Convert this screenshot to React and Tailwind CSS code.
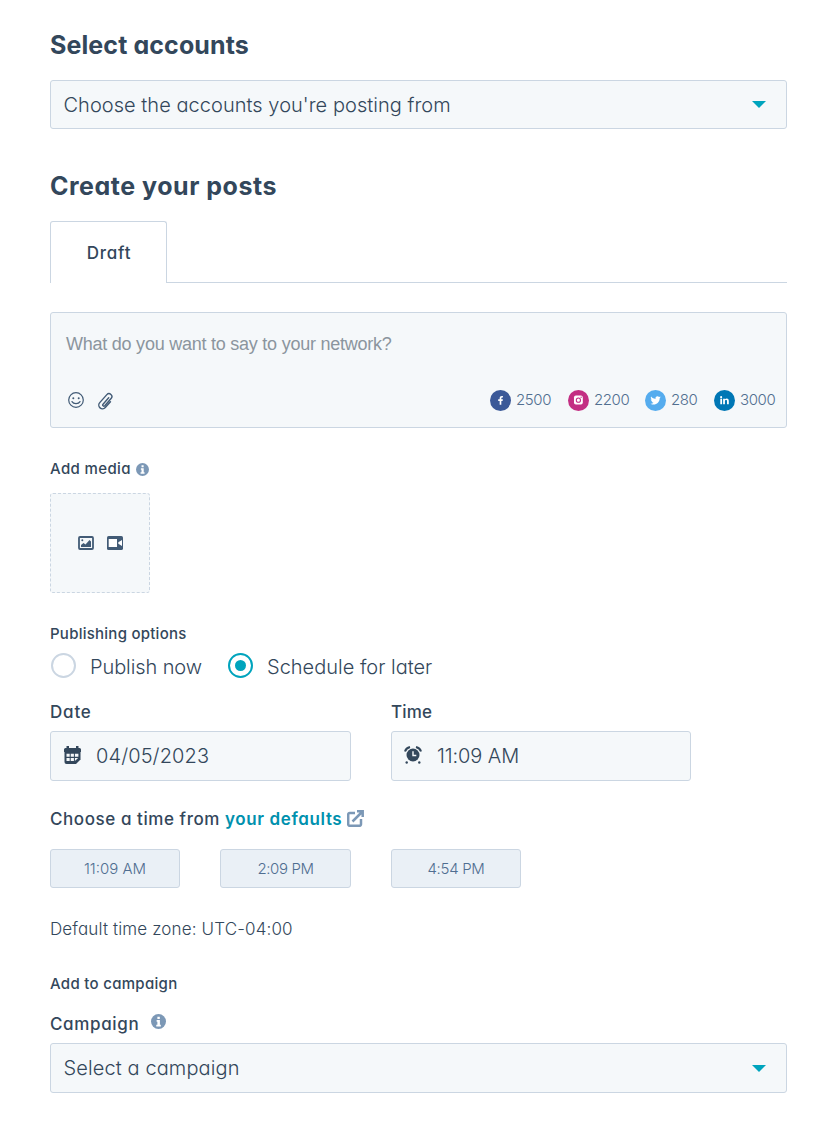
import React from 'react';
import clsx from 'clsx';

const InfoIcon = ({ className }) => (
  <svg viewBox="0 0 16 16" className={className}>
    <circle cx="8" cy="8" r="8" fill="#7c98b6" />
    <path d="M6.800 2.800h2.600v2.400H6.800zM6 6.500h3.500v4.900h1v1.800H5.600v-1.800h1.200V8.300H6z" fill="#fff" />
  </svg>
);

const SmileIcon = () => (
  <svg viewBox="0 0 16 16" className="w-4 h-4" fill="none" stroke="#425b76" strokeWidth="1.2">
    <circle cx="8" cy="8" r="7.3" />
    <path d="M4 9.6c.8 1.500 2.200 2.100 4 2.100s3.200-.6 4-2.100" strokeLinecap="round" />
    <circle cx="5.300" cy="6.200" r="1" fill="#425b76" stroke="none" />
    <circle cx="10.700" cy="6.200" r="1" fill="#425b76" stroke="none" />
  </svg>
);

const ClipIcon = () => (
  <svg viewBox="0 0 24 24" className="w-[17px] h-[18px] mt-[2px]" fill="none" stroke="#425b76" strokeWidth="2" strokeLinecap="round" strokeLinejoin="round">
    <path d="m16.500 7.500-8 9a1.600 1.600 0 0 0 2.400 2.200l9-10.300a4 4 0 0 0-6-5.400l-10 11.300a5.200 5.200 0 0 0 7.800 7l7.300-8.300" />
  </svg>
);

const ImageIcon = () => (
  <svg viewBox="0 0 16 14" className="w-4 h-[14px]">
    <rect x="1" y="1" width="14" height="12" rx="1" fill="none" stroke="#425b76" strokeWidth="1.800" />
    <path d="M3 11V9l2.500-2 2 1.500 4-4.500L13 5.500V11z" fill="#425b76" />
    <circle cx="4.300" cy="4.300" r="1" fill="#425b76" />
  </svg>
);

const VideoIcon = () => (
  <svg viewBox="0 0 16 14" className="w-4 h-[14px]">
    <rect width="16" height="14" rx="1.600" fill="#425b76" />
    <path d="M1.700 3h8.300v8H1.700zM15 4v6l-3.700-2.300V6.300z" fill="#fff" />
  </svg>
);

const CalendarIcon = () => (
  <svg viewBox="0 0 17 18" className="w-[17px] h-[18px]">
    <path d="M2.500 0h2.500v2h7V0h2.500v2h1A1.500 1.500 0 0 1 17 3.500V6H0V3.500A1.500 1.500 0 0 1 1.500 2h1z" fill="#33475b" />
    <path d="M.5 6h16v7.500L12 18H2.500a2 2 0 0 1-2-2z" fill="#33475b" />
    <path d="M2.500 7.800h3.200v3H2.500zm4.200 0h3.200v3H6.700zm4.200 0h3.500v3h-3.500zM2.500 12h3.200v3H2.500zm4.200 0h3.200v3H6.700zm4.200 0h3.200l-3.200 3z" fill="#f5f8fa" />
  </svg>
);

const AlarmIcon = () => (
  <svg viewBox="0 0 18 18" className="w-[18px] h-[18px] -ml-px">
    <circle cx="9" cy="9" r="6.500" fill="#33475b" />
    <path d="M9 5.200V9.500H12.300" fill="none" stroke="#f5f8fa" strokeWidth="1.400" />
    <path d="M1 5.500Q2 2 6 1M12 1q4 1 5 4.500" fill="none" stroke="#33475b" strokeWidth="2" />
    <circle cx="2.700" cy="16.500" r="1.200" fill="#33475b" />
    <circle cx="15.300" cy="16.500" r="1.200" fill="#33475b" />
  </svg>
);

const ExternalIcon = () => (
  <svg viewBox="0 0 17 17" className="w-[17px] h-[17px] mb-[4px]" fill="none" stroke="#7c98b6" strokeWidth="2.500">
    <path d="M8 3H2.700A1.500 1.500 0 0 0 1.200 4.500v9.800a1.500 1.500 0 0 0 1.500 1.500h9.800a1.500 1.500 0 0 0 1.500-1.500V9M5.500 11.500 15 2M10 1.300h5.700V7" />
  </svg>
);

const networks = [
  {
    name: 'facebook',
    count: '2500',
    width: 'w-[78px]',
    color: '#3b5998',
    glyph: <path d="M9.200 14v-3.500H7.800V8.900h1.400V7.800c0-1.500.9-2.200 2.100-2.200h1v1.500h-.7c-.6 0-.8.3-.8.800v1h1.500l-.3 1.600h-1.200V14z" fill="#fff" />
  },
  {
    name: 'instagram',
    count: '2200',
    width: 'w-[77px]',
    color: '#c32f83',
    glyph: (
      <>
        <rect x="5.700" y="5.300" width="8.400" height="8.400" rx="1.800" fill="#fff" />
        <circle cx="9.900" cy="9.700" r="2" fill="none" stroke="#c32f83" strokeWidth="1" />
        <circle cx="12.500" cy="6.900" r=".6" fill="#c32f83" />
      </>
    )
  },
  {
    name: 'twitter',
    count: '280',
    width: 'w-[69px]',
    color: '#55acee',
    glyph: <path d="M15 6.900c-.3.200-.7.300-1.100.3.400-.3.700-.6.800-1.100-.4.200-.8.400-1.300.5a2 2 0 0 0-3.400 1.900C8.300 8.400 6.800 7.600 5.800 6.300a2 2 0 0 0 .6 2.700c-.3 0-.6-.1-.9-.2 0 1 .7 1.800 1.600 2-.3.100-.6.100-.9 0 .2.800 1 1.400 1.900 1.400A4 4 0 0 1 5.200 13c4.100 2.400 8.800-.4 8.800-5.100.4-.3.700-.6 1-1z" fill="#fff" />
  },
  {
    name: 'linkedin',
    count: '3000',
    width: 'w-[62px]',
    color: '#0077b5',
    glyph: <path d="M6 8.400h1.700v5.100H6zM6.800 5.800a1 1 0 1 1 0 2 1 1 0 0 1 0-2zM8.700 8.400h1.700v.7c.3-.5.900-.9 1.700-.9 1.500 0 2 .9 2 2.300v3h-1.700v-2.700c0-.7-.2-1.200-.9-1.200s-1.100.5-1.100 1.200v2.700H8.700z" fill="#fff" />
  }
];

const times = [
  { label: '11:09 AM', size: 'w-[130px] mr-10' },
  { label: '2:09 PM', size: 'w-[131px] mr-10 tracking-[-0.4px]' },
  { label: '4:54 PM', size: 'w-[130px] tracking-[-0.3px]' }
];

const Select = ({ children, className }) => (
  <div className={clsx('flex items-center justify-between rounded-[3px] border border-[#cbd6e2] bg-[#f5f8fa] pl-[12.5px] pr-5 text-[20px] font-light', className)}>
    {children}
    <svg viewBox="0 0 14 7" className="w-[14px] h-[7px]">
      <path d="M0 0h14L7 7z" fill="#00a4bd" />
    </svg>
  </div>
);

const Field = ({ label, icon, value, tracking, labelTracking, className }) => (
  <div className={className}>
    <div className={clsx('h-6 text-[17px] font-medium leading-6', labelTracking)}>{label}</div>
    <div className="mt-[7px] flex h-[50px] items-center rounded-[3px] border border-[#cbd6e2] bg-[#f5f8fa] pl-[13px] text-[20px] font-light">
      <span className="mb-[3px] w-8 shrink-0">{icon}</span>
      <span className={tracking}>{value}</span>
    </div>
  </div>
);

const Radio = ({ checked }) => (
  <span className={clsx('flex h-[25px] w-[25px] shrink-0 items-center justify-center rounded-full border-2', checked ? 'border-[#00a4bd]' : 'border-[#cbd6e2]')}>
    {checked && <span className="h-[11px] w-[11px] rounded-full bg-[#00a4bd]" />}
  </span>
);

const App = () => {
  return (
    <main className="h-[1124px] w-[817px] bg-white pl-[50px] pr-[30px] pt-7 font-['Inter',sans-serif] text-[#33475b] whitespace-nowrap [font-feature-settings:'cv11']">
      <h2 className="h-[34px] text-[25px] font-bold leading-[34px] tracking-[0.1px]">Select accounts</h2>
      <Select className="mt-[18px] h-[49px]">
        <span className="tracking-[0.04px]">Choose the accounts you're posting from</span>
      </Select>

      <h2 className="mt-10 h-[34px] text-[25px] font-bold leading-[34px] tracking-[0.52px]">Create your posts</h2>
      <div className="mt-[18px] flex h-[62px]">
        <div className="flex w-[117px] items-center justify-center rounded-t-[3px] border border-b-0 border-[#cbd6e2] pl-px pt-[2px] text-[17px] font-medium tracking-[0.8px]">
          Draft
        </div>
        <div className="flex-1 border-b border-[#cbd6e2]" />
      </div>

      <div className="mt-[29px] flex h-[116px] flex-col justify-between rounded-[3px] border border-[#cbd6e2] bg-[#f5f8fa] pl-[15px] pt-5">
        <div className="font-['Liberation_Sans',Arial,sans-serif] text-[18px] leading-[22px] tracking-[-0.24px] text-[#8b959e]">
          What do you want to say to your network?
        </div>
        <div className="flex h-5 items-center justify-between mb-[17px]">
          <div className="flex items-center gap-[13px] pl-[2px]">
            <SmileIcon />
            <ClipIcon />
          </div>
          <div className="flex pr-[10px]">
            {networks.map((network) => (
              <div key={network.name} className={clsx('flex items-center gap-[5px] text-[15px] font-light tracking-[-0.4px] text-[#516f90]', network.width)}>
                <svg viewBox="0 0 20 20" className="h-[21px] w-[21px] shrink-0">
                  <circle cx="10" cy="10" r="10" fill={network.color} />
                  {network.glyph}
                </svg>
                <span>{network.count}</span>
              </div>
            ))}
          </div>
        </div>
      </div>

      <div className="mt-[31px] flex h-5 items-center gap-[6px] text-[15px] font-medium tracking-[0.37px]">
        <span className="w-20">Add media</span>
        <InfoIcon className="h-[13px] w-[13px]" />
      </div>
      <div className="mt-[14px] flex h-[100px] w-[100px] items-center justify-center gap-[13px] rounded-[3px] border border-dashed border-[#cbd6e2] bg-[#f5f8fa]">
        <ImageIcon />
        <VideoIcon />
      </div>

      <div className="mt-[31px] h-5 text-[15px] font-medium leading-5 tracking-[0.25px]">Publishing options</div>
      <div className="mt-[9px] flex h-[25px] items-center pl-[1px] text-[20px] font-light">
        <Radio />
        <span className="ml-[14px] w-[138px] pt-[2px] tracking-[-0.1px]">Publish now</span>
        <Radio checked />
        <span className="ml-[14px] pt-[2px]">Schedule for later</span>
      </div>

      <div className="mt-[22px] flex gap-10">
        <Field label="Date" icon={<CalendarIcon />} value="04/05/2023" labelTracking="tracking-[0.8px]" tracking="tracking-[0.1px]" className="w-[301px]" />
        <Field label="Time" icon={<AlarmIcon />} value="11:09 AM" labelTracking="tracking-[0.2px]" tracking="tracking-[-0.1px]" className="w-[300px]" />
      </div>

      <div className="mt-[27px] flex h-6 items-center text-[17px] font-medium">
        <span className="w-[175px] tracking-[0.57px]">Choose a time from</span>
        <span className="w-[122px] font-semibold tracking-[0.62px] text-[#0091ae]">your defaults</span>
        <ExternalIcon />
      </div>
      <div className="mt-[17px] flex h-[39px]">
        {times.map((time) => (
          <button key={time.label} className={clsx('rounded-[3px] border border-[#cbd6e2] bg-[#eaf0f6] pt-[2px] text-[15px] font-light text-[#506e91]', time.size)}>
            {time.label}
          </button>
        ))}
      </div>

      <div className="mt-[29px] h-6 text-[17px] font-light leading-6 tracking-[0.14px]">Default time zone: UTC-04:00</div>

      <div className="mt-[33px] h-5 text-[15px] font-medium leading-5 tracking-[0.3px]">Add to campaign</div>
      <div className="mt-[19px] flex h-6 items-center text-[17px] font-medium tracking-[0.65px]">
        <span className="w-[101px]">Campaign</span>
        <InfoIcon className="mb-[7px] h-[15px] w-[15px]" />
      </div>
      <Select className="mt-[6px] h-[50px]">
        <span className="tracking-[0.11px]">Select a campaign</span>
      </Select>
    </main>
  );
};

export default App;
